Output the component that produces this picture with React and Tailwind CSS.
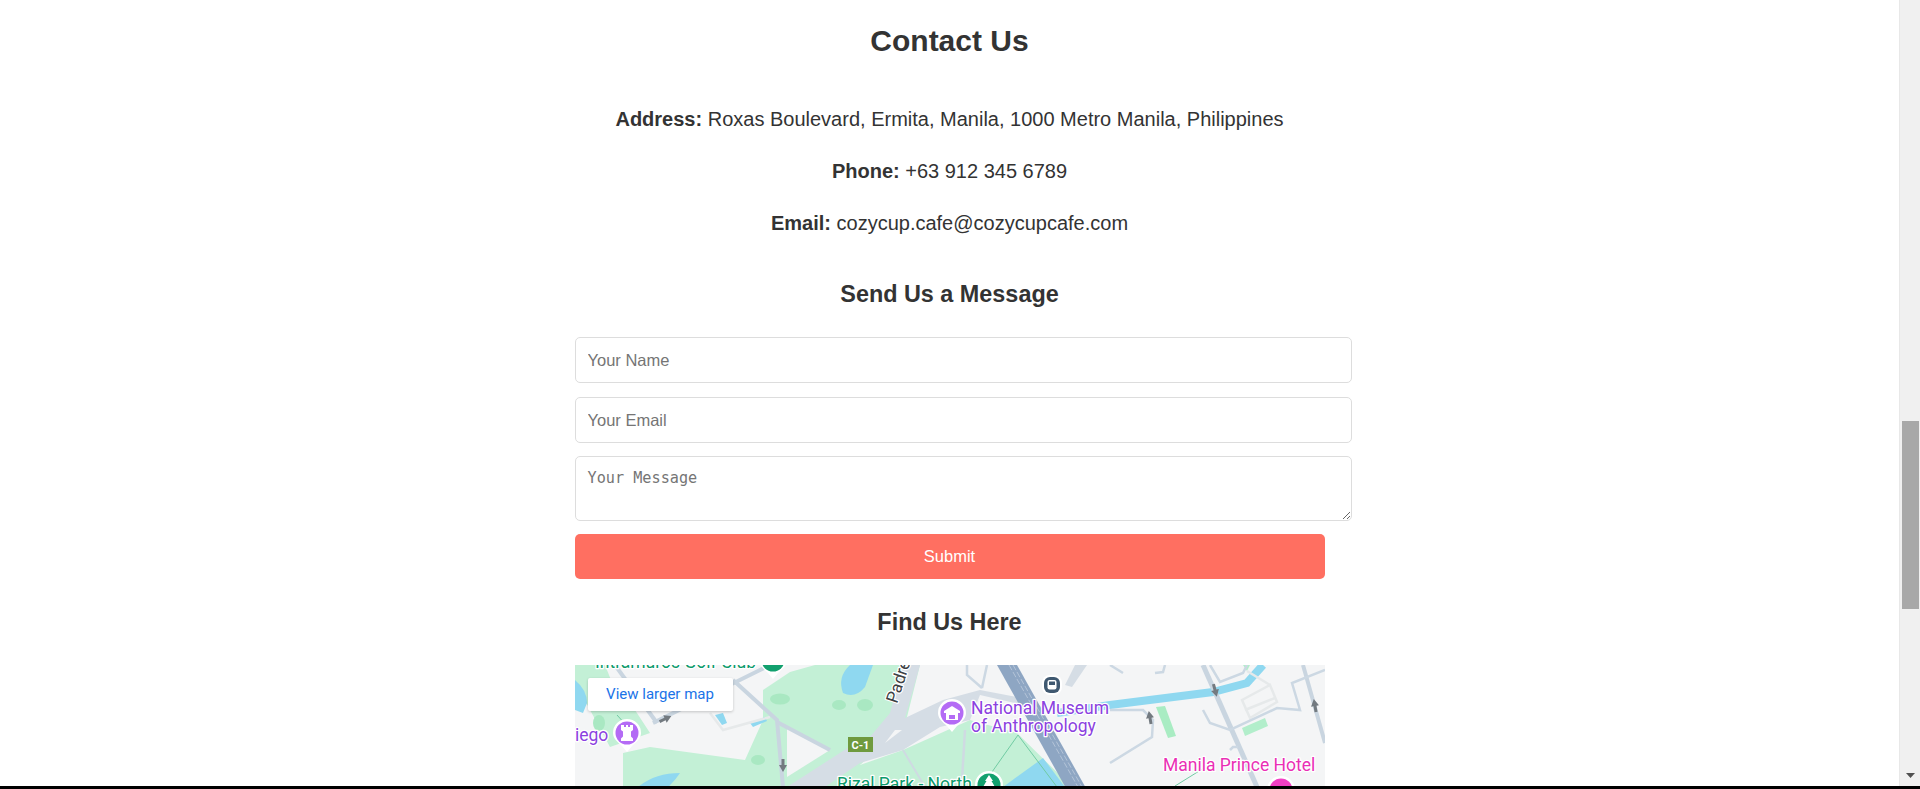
import React from "react";

function Pin({ x, y, fill, children }) {
  return (
    <g transform={`translate(${x} ${y})`}>
      <path d="M-14 0a14 14 0 1 1 28 0c0 6-5 9-9 13l-5 6-5-6c-4-4-9-7-9-13z" fill="#fff" />
      <circle r="11.5" fill={fill} />
      {children}
    </g>
  );
}

function Arrow({ x, y, r }) {
  return <path transform={`translate(${x} ${y}) rotate(${r})`} d="M0-7L4 0H1.5V6H-1.5V0H-4Z" fill="#737a80" />;
}

function MapArt() {
  const label = { fontFamily: "Roboto, sans-serif", fontSize: 17.5, paintOrder: "stroke", stroke: "#fff", strokeWidth: 2.5, strokeLinejoin: "round" };
  return (
    <svg viewBox="0 0 750 121" className="block w-full h-full" role="img" aria-label="Map">
      <rect width="750" height="121" fill="#f4f5f6" />
      {/* parks */}
      <path d="M0 17L35 82L75 68L60 45L40 25L30 0L0 0Z" fill="#c3f0d6" />
      <path d="M48 88L75 82L170 95L188 55V25L215 7L240 0H345L330 60L285 100L285 125H48Z" fill="#c3f0d6" />
      <path d="M285 100L328 85L395 55L442 68L500 125H285Z" fill="#c3f0d6" />
      <path d="M212 63L255 85L212 112Z" fill="#f4f5f6" />
      <path d="M581 42L590 41L601 71L593 73Z" fill="#a9ecc3" />
      <path d="M667 63L690 53L693 61L670 71Z" fill="#b2eecb" />
      <path d="M668 0H675L672 6Z" fill="#b2eecb" />
      <ellipse cx="205" cy="34" rx="10" ry="5.5" fill="#a9e8c2" />
      <ellipse cx="183" cy="95" rx="7" ry="5" fill="#a9e8c2" />
      <ellipse cx="264" cy="40" rx="7" ry="5" fill="#a9e8c2" />
      <ellipse cx="290" cy="40" rx="8" ry="6" fill="#a9e8c2" />
      <ellipse cx="24" cy="58" rx="6" ry="8" fill="#a9e8c2" />
      {/* water */}
      <path d="M0 15Q12 25 12 38L8 48L0 45Z" fill="#8fd8f0" />
      <path d="M275 0Q262 12 268 28Q280 34 290 22L298 0Z" fill="#8fd8f0" />
      <path d="M63 122Q80 108 105 108Q100 116 90 125H60Z" fill="#8fd8f0" />
      <path d="M428 122L468 93L490 122Z" fill="#8fd8f0" />
      <path d="M482 48L535 40L638 27L672 18L688 0" fill="none" stroke="#8fd8f0" strokeWidth="8" />
      <path d="M140 50L148 48L152 58L147 60Z" fill="#8fd8f0" />
      <path d="M175 58L190 52L192 56L178 62Z" fill="#8fd8f0" />
      {/* pale roads */}
      <g fill="none" stroke="#e6e9ea" strokeWidth="2.5">
        <path d="M667 35L695 20L702 37L675 53Z" />
        <path d="M670 45L700 33" />
        <path d="M135 48L148 65L195 52" />
        <path d="M672 6L695 20" />
      </g>
      {/* minor roads */}
      <g fill="none" stroke="#c9d5e0" strokeWidth="4">
        <path d="M158 15L202 55L208 122" />
        <path d="M202 57L255 85" />
        <path d="M78 58L185 5L195 0" />
        <path d="M40 0L82 58" />
        <path d="M628 0L682 122" strokeWidth="5" />
        <path d="M728 0L750 78" strokeWidth="4" />
      </g>
      <g fill="none" stroke="#ccd8e3" strokeWidth="2.5">
        <path d="M628 45L635 58L655 65L702 43L725 45L717 18L750 5" />
        <path d="M535 45H568L578 55L577 72L535 98" />
        <path d="M635 0L645 17L668 8L672 0" />
        <path d="M412 0L407 23M392 0V10L407 23" />
        <path d="M535 0L548 8M590 0L588 7L580 8" />
        <path d="M655 85L658 82H663" />
      </g>
      {/* main roads */}
      <path d="M212 122L285 75L295 72L315 48L328 0H345L330 53L368 35L405 25L458 35L470 45L405 30L395 55L365 62L328 85L285 98L250 122Z" fill="#d5dde5" />
      <path d="M500 0H512L497 22L490 20Z" fill="#d5dde5" />
      <path d="M422 0H442L512 125H492Z" fill="#8ea6c3" />
      <path d="M434 0L503 122" stroke="#b4c4d8" strokeWidth="1" fill="none" strokeDasharray="6 2" />
      <path d="M438 0L507 122" stroke="#b4c4d8" strokeWidth="1" fill="none" strokeDasharray="6 2" />
      <path d="M310 78L327 65L320 65Z" fill="#f4f5f6" />
      {/* thin park paths */}
      <g fill="none" stroke="#71cba3" strokeWidth="1">
        <path d="M443 70L417 107M443 70L482 122" />
        <path d="M629 103L600 121" />
        <path d="M42 50L60 70" />
      </g>
      <path d="M390 65L387 115" stroke="#cfdae2" strokeWidth="2.5" />
      <path d="M328 85L350 122" stroke="#cfdae2" strokeWidth="2" />
      {/* arrows */}
      <Arrow x="90" y="54" r="65" />
      <Arrow x="208" y="100" r="180" />
      <Arrow x="575" y="53" r="-10" />
      <Arrow x="640" y="25" r="165" />
      <Arrow x="740" y="41" r="-10" />
      {/* C-1 shield */}
      <rect x="273" y="72" width="25" height="15" fill="#6f9a3e" />
      <text x="285.5" y="83.5" textAnchor="middle" fill="#fff" fontFamily="Roboto, sans-serif" fontSize="11" fontWeight="700">C-1</text>
      {/* Padre label */}
      <text transform="translate(322 39) rotate(-72)" fill="#3c4043" style={{ ...label, fontSize: 17 }}>Padre</text>
      {/* transit */}
      <rect x="467" y="10" width="20" height="20" rx="8" fill="#fff" />
      <rect x="469" y="12" width="16" height="16" rx="6" fill="#3f5870" />
      <rect x="472.5" y="15" width="9" height="9.5" rx="2" fill="#fff" />
      <rect x="474" y="16.5" width="6" height="3.5" fill="#3f5870" />
      {/* labels */}
      <text x="20" y="3" fill="#0b9a6b" style={label}>Intramuros Golf Club</text>
      <text x="0" y="76" fill="#8b41e0" style={label}>iego</text>
      <text x="396" y="49" fill="#8b41e0" style={label}>National Museum</text>
      <text x="396" y="67" fill="#8b41e0" style={label}>of Anthropology</text>
      <text x="262" y="125" fill="#0b9a6b" style={label}>Rizal Park - North</text>
      <text x="588" y="106" fill="#ea2fb5" style={label}>Manila Prince Hotel</text>
      {/* pins */}
      <Pin x="198" y="-5" fill="#12a06e" />
      <Pin x="52" y="68" fill="#b46bf5">
        <path d="M-6-8h3v2h2v-2h2v2h2v-2h3v5l-2 1.5v5l2 2v2.5h-12v-2.5l2-2v-5l-2-1.5z" fill="#fff" />
      </Pin>
      <Pin x="377" y="48" fill="#b46bf5">
        <path d="M-8-2L0-7L8-2V0H-8Z" fill="#fff" />
        <rect x="-6" y="0" width="12" height="7" fill="#fff" />
        <rect x="-3" y="2" width="6" height="4" fill="#b46bf5" />
      </Pin>
      <Pin x="414" y="120" fill="#12a06e">
        <path d="M0-10L4-4H2.5L6 2H-6L-2.5-4H-4Z" fill="#fff" />
      </Pin>
      <Pin x="706" y="125" fill="#f23fc4" />
    </svg>
  );
}

export default function App() {
  return (
    <div className="h-[789px] flex flex-col overflow-hidden bg-white text-[#333333]" style={{ fontFamily: '"Liberation Sans", Arial, sans-serif' }}>
      <div className="flex flex-1 min-h-0">
        <main className="flex-1 min-w-0 overflow-hidden">
          <div className="w-[750px] mx-auto">
            <h2 className="text-[30px] leading-[33px] font-bold text-center mt-[24px]">Contact Us</h2>
            <p className="text-[20px] leading-[22px] text-center mt-[51px]"><strong>Address:</strong> Roxas Boulevard, Ermita, Manila, 1000 Metro Manila, Philippines</p>
            <p className="text-[20px] leading-[22px] text-center mt-[30px]"><strong>Phone:</strong> +63 912 345 6789</p>
            <p className="text-[20px] leading-[22px] text-center mt-[30px]"><strong>Email:</strong> cozycup.cafe@cozycupcafe.com</p>
            <h3 className="text-[23.4px] leading-[26px] font-bold text-center mt-[47px]">Send Us a Message</h3>
            <form className="mt-[30px] flex flex-col items-start">
              <input placeholder="Your Name" className="w-[777px] h-[46px] shrink-0 px-3 border border-[#dddddd] rounded-[5px] text-[16.5px] bg-white placeholder:text-[#757575]" />
              <input placeholder="Your Email" className="w-[777px] h-[46px] shrink-0 mt-[14px] px-3 border border-[#dddddd] rounded-[5px] text-[16.5px] bg-white placeholder:text-[#757575]" />
              <textarea placeholder="Your Message" className="w-[777px] h-[65px] shrink-0 mt-[13px] px-3 pt-[12px] border border-[#dddddd] rounded-[5px] text-[15.2px] leading-[18px] bg-white placeholder:text-[#757575]" style={{ fontFamily: '"DejaVu Sans Mono", monospace' }} />
              <button type="button" className="w-[750px] h-[45px] mt-[13px] pb-[1px] bg-[#ff6f61] text-white text-[16.5px] rounded-[5px]">Submit</button>
            </form>
            <h3 className="text-[23.4px] leading-[26px] font-bold text-center mt-[30px]">Find Us Here</h3>
            <div className="relative w-[750px] h-[121px] mt-[30px] overflow-hidden">
              <MapArt />
              <div className="absolute left-[13px] top-[13px] w-[145px] h-[33px] bg-white rounded-[2px] shadow-[0_1px_3px_rgba(0,0,0,0.2)] flex items-center justify-center text-[15px] text-[#1a73e8]" style={{ fontFamily: "Roboto, sans-serif" }}>View larger map</div>
            </div>
          </div>
        </main>
        <aside className="w-[21px] shrink-0 bg-[#f0f0f0] border-l border-[#e8e8e8] flex flex-col items-center">
          <div className="w-[17px] h-[188px] mt-[421px] bg-[#a8a8a8]" />
          <svg viewBox="0 0 9 5" className="w-[9px] h-[5px] mt-auto mb-[8px]"><path d="M0 0H9L4.5 5Z" fill="#505050" /></svg>
        </aside>
      </div>
      <div className="h-[3px] shrink-0 bg-black" />
    </div>
  );
}
